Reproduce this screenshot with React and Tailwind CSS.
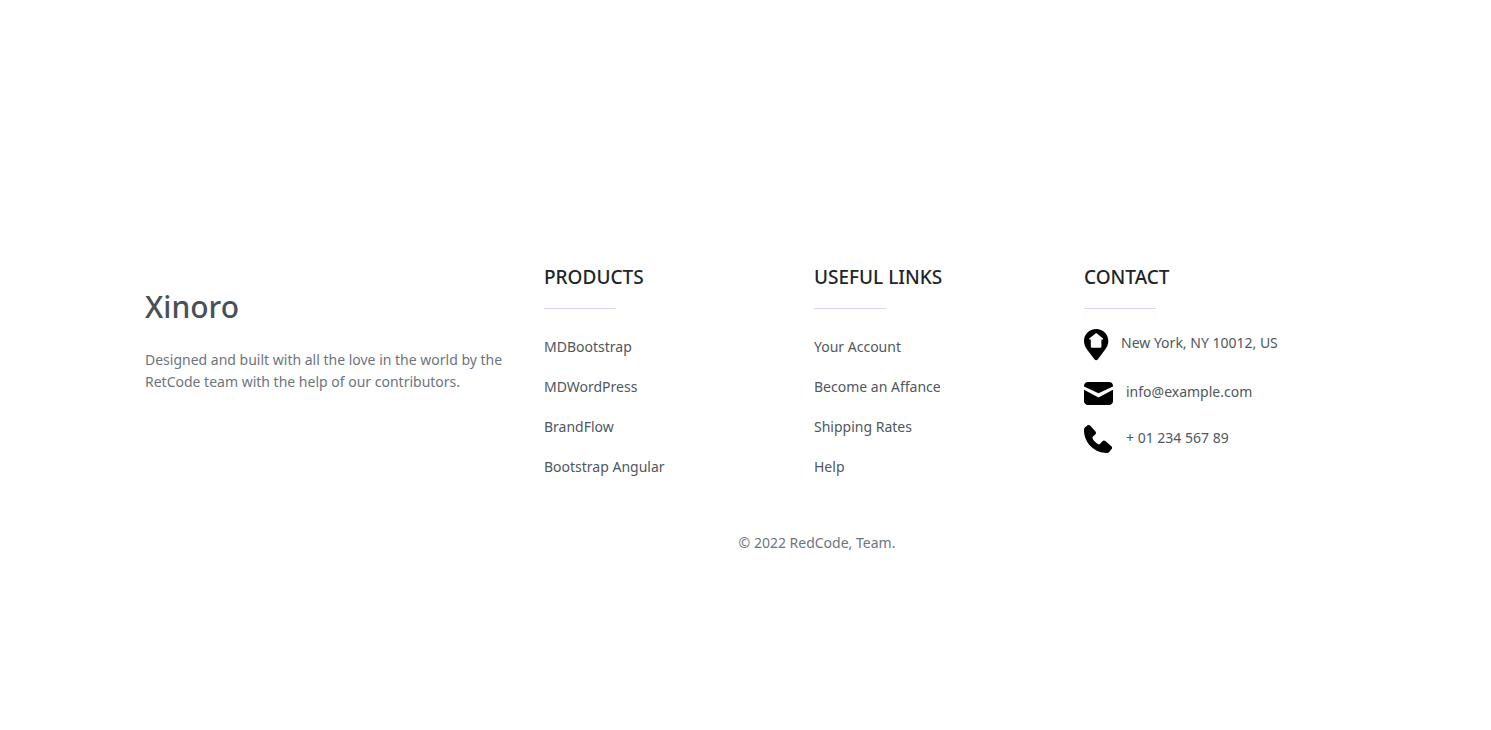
const columns = [
  { title: 'PRODUCTS', links: ['MDBootstrap', 'MDWordPress', 'BrandFlow', 'Bootstrap Angular'] },
  { title: 'USEFUL LINKS', links: ['Your Account', 'Become an Affance', 'Shipping Rates', 'Help'] },
];

function ColumnTitle({ children }) {
  return (
    <>
      <h2 className="text-[19px] leading-6 font-medium text-[#212529]">{children}</h2>
      <hr className="mt-[19px] h-px w-[72px] border-0 bg-[#d9d3ff]" />
    </>
  );
}

function PinIcon() {
  return (
    <svg className="h-8 w-[25px] shrink-0" viewBox="0 0 25 32" aria-hidden="true">
      <path
        fillRule="evenodd"
        d="M12.2 0C5.4 0 0 5.3 0 12c0 3.700 1.500 6.400 3.400 9.100l7 9.200c1 1.200 2.600 1.200 3.500 0l6.900-9.200C22.800 18.400 24.300 15.700 24.300 12 24.300 5.300 19 0 12.200 0ZM12.200 4l6.900 5.400v1.200h-1.700v6.900q0 1.200-1.200 1.200H8q-1.200 0-1.200-1.200v-6.900H5.200V9.400Z"
      />
    </svg>
  );
}

function MailIcon() {
  return (
    <svg className="h-6 w-[29px] shrink-0" viewBox="0 0 29 24" aria-hidden="true">
      <path d="M4 0h21.200c2 0 3.800 1.600 3.800 3.700v.8l-14.500 6.700L0 4.500v-.8C0 1.600 1.800 0 4 0Z" />
      <path d="M0 7.800l14.500 7.700L29 7.800v11.500c0 2-1.700 3.700-3.800 3.700H4c-2.200 0-4-1.700-4-3.700Z" />
    </svg>
  );
}

function PhoneIcon() {
  return (
    <svg className="h-7 w-[29px] shrink-0" viewBox="0 0 29 28" aria-hidden="true">
      <path d="M3.300.5C4.300-.2 5.500-.1 6.300.8l5.200 5.700c.7.800.7 2-.1 2.800L9 11.600c-.7.700-.7 1.500-.2 2.300 1.200 2 3 3.900 5.100 5.200.8.500 1.600.4 2.200-.3l2.400-2.600c.8-.8 2-.9 2.900-.1l6 5.100c.9.800 1 2 .2 2.900l-2.400 2.900c-.5.600-1.200.9-2 .9C10.400 28 0 17.800 0 5.200c0-1.200.3-2.300 1.200-3Z" />
    </svg>
  );
}

export default function App() {
  return (
    <footer className="min-h-screen bg-white pt-[265px] font-['Noto_Sans','Open_Sans',sans-serif] text-sm leading-[22px] text-[#50575e]">
      <div className="grid grid-cols-[399fr_270fr_270fr_270fr] pr-[137px] pl-[145px]">
        <section className="pt-6 pr-8">
          <h1 className="text-[30px] leading-9 font-medium text-[#495057]">Xinoro</h1>
          <p className="mt-6 text-[#6c757d]">
            Designed and built with all the love in the world by the RetCode team with the help of our contributors.
          </p>
        </section>
        {columns.map(({ title, links }) => (
          <nav key={title} aria-label={title}>
            <ColumnTitle>{title}</ColumnTitle>
            <ul className="mt-[27px] flex flex-col gap-[18px]">
              {links.map((link) => (
                <li key={link}>
                  <a href="#">{link}</a>
                </li>
              ))}
            </ul>
          </nav>
        ))}
        <address className="not-italic">
          <ColumnTitle>CONTACT</ColumnTitle>
          <ul className="mt-5 flex flex-col text-black">
            <li className="flex gap-3 pb-[21px]">
              <PinIcon />
              <span className="leading-7 text-[#50575e]">New York, NY 10012, US</span>
            </li>
            <li className="flex gap-[13px] pb-[19px]">
              <MailIcon />
              <a href="mailto:info@example.com" className="leading-5 text-[#50575e]">info@example.com</a>
            </li>
            <li className="flex gap-[13px]">
              <PhoneIcon />
              <a href="tel:+0123456789" className="leading-[26px] text-[#50575e]">+ 01 234 567 89</a>
            </li>
          </ul>
        </address>
      </div>
      <p className="mt-[54px] pl-[143px] text-center text-[#6c757d]">© 2022 RedCode, Team.</p>
    </footer>
  );
}
